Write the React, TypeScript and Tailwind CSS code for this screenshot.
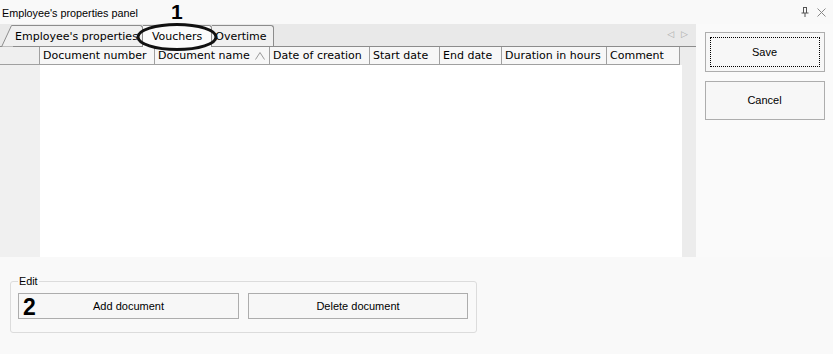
import React from 'react';

const cols = [
  { label: 'Document number', w: 115 },
  { label: 'Document name', w: 115, sort: true },
  { label: 'Date of creation', w: 100 },
  { label: 'Start date', w: 70 },
  { label: 'End date', w: 62 },
  { label: 'Duration in hours', w: 105 },
  { label: 'Comment', w: 73 },
];

function Tab({ label, active, first, cls }: { label: string; active?: boolean; first?: boolean; cls: string }) {
  return (
    <div
      className={`relative flex items-center pt-[2px] border-t border-r border-[#8c8c8c] rounded-tr-[3px] text-[11px] ${
        active ? 'bg-[#fbfbfb] h-[22px] mb-[-1px] z-10' : 'bg-[#f0f0f0] h-[21px]'
      } ${cls}`}
    >
      {first && (
        <svg className="absolute left-[-11px] top-[-1px]" width="12" height="22" viewBox="0 0 12 22">
          <path d="M12 21.5 L0.5 21.5 L10.5 0.5 L12 0.5 Z" fill="#f0f0f0" stroke="none" />
          <path d="M0.5 22 L10.5 0.5 L12 0.5" fill="none" stroke="#8c8c8c" />
        </svg>
      )}
      {label}
    </div>
  );
}

function Btn({ children, w, focus }: { children: React.ReactNode; w: string; focus?: boolean }) {
  return (
    <div
      className={`${w} relative flex items-center justify-center border border-[#adadad] bg-[#f7f7f7] text-[11px] text-black`}
      style={{ fontFamily: '"Liberation Sans", Arial, sans-serif' }}
    >
      {focus && <div className="absolute inset-[4px] border border-dotted border-black" />}
      <span className="relative">{children}</span>
    </div>
  );
}

export default function App() {
  return (
    <div
      className="relative w-[833px] h-[354px] bg-[#f9f9f9] overflow-hidden text-black"
      style={{ fontFamily: '"DejaVu Sans", Verdana, sans-serif' }}
    >
      {/* title bar */}
      <div
        className="h-[24px] flex items-center justify-between pl-[2px] pr-[7px] bg-[#f9f9f9] text-[10.8px]"
        style={{ fontFamily: '"Liberation Sans", Arial, sans-serif' }}
      >
        <span className="mt-[2px]">Employee's properties panel</span>
        <div className="flex items-center gap-[8px] text-[#555]">
          <svg width="8" height="10" viewBox="0 0 8 10">
            <path d="M2 0.5 H6 M2.5 0.5 V6 M5.5 0.5 V6 M0.5 6 H7.5 M4 6 V10" stroke="#555" fill="none" />
          </svg>
          <svg width="9" height="9" viewBox="0 0 9 9">
            <path d="M0.5 0.5 L8.5 8.5 M8.5 0.5 L0.5 8.5" stroke="#888" fill="none" />
          </svg>
        </div>
      </div>

      <div className="flex">
        {/* left: tabs + grid */}
        <div className="w-[696px] flex flex-col">
          <div className="h-[23px] bg-[#e9e9e9] flex items-end border-b border-[#8c8c8c] relative">
            <Tab label="Employee's properties" first cls="ml-[12px] pl-[3px] pr-[4px]" />
            <Tab label="Vouchers" active cls="pl-[9px] pr-[9px]" />
            <Tab label="Overtime" cls="pl-[3px] pr-[6px]" />
            <div className="absolute right-[8px] top-[4px] flex gap-[7px] text-[9px] text-[#aaa]">
              <span>◁</span>
              <span>▷</span>
            </div>
          </div>
          <div className="flex h-[18px] bg-[#f2f2f2]">
            <div className="w-[40px] border-r border-b border-[#a0a0a0] bg-[#efefef]" />
            {cols.map((c) => (
              <div
                key={c.label}
                style={{ width: c.w }}
                className="relative flex items-center pl-[3px] pt-[2px] border-r border-b border-[#a0a0a0] bg-[#f7f7f7] text-[11px] whitespace-nowrap overflow-hidden"
              >
                {c.label}
                {c.sort && (
                  <svg className="absolute right-[4px] top-[5px]" width="10" height="8" viewBox="0 0 10 8">
                    <path d="M0.5 7.5 L5 0.5 L9.5 7.5" stroke="#9a9a9a" fill="none" />
                  </svg>
                )}
              </div>
            ))}
            <div className="w-[2px] bg-[#ececec]" />
            <div className="w-[14px] bg-[#ececec]" />
          </div>
          <div className="flex h-[192px]">
            <div className="w-[40px] bg-[#f0f0f0]" />
            <div className="w-[642px] bg-white" />
            <div className="w-[14px] bg-[#ececec]" />
          </div>
        </div>

        {/* right: actions */}
        <div className="flex-1 flex flex-col items-center pt-[8px] gap-[9px] bg-[#fafafa]">
          <Btn w="w-[120px] h-[40px]" focus>
            Save
          </Btn>
          <Btn w="w-[120px] h-[39px]">Cancel</Btn>
        </div>
      </div>

      {/* bottom edit group */}
      <div className="pt-[24px] pl-[10px]" style={{ fontFamily: '"Liberation Sans", Arial, sans-serif' }}>
        <div className="relative w-[467px] h-[52px] border border-[#dcdcdc] rounded-[3px] flex gap-[9px] pl-[7px] pt-[11px]">
          <span className="absolute left-[7px] top-[-8px] bg-[#f9f9f9] px-[1px] text-[10.8px] leading-[14px]">Edit</span>
          <Btn w="w-[221px] h-[26px]">Add document</Btn>
          <Btn w="w-[220px] h-[26px]">Delete document</Btn>
        </div>
      </div>

      {/* annotations */}
      <div
        className="absolute z-20 left-[171px] top-[0px] text-[21px] font-bold leading-[24px]"
        style={{ fontFamily: '"Liberation Sans", Arial, sans-serif' }}
      >
        1
      </div>
      <svg className="absolute z-20 left-[136px] top-[22px]" width="82" height="30" viewBox="0 0 82 30">
        <ellipse cx="41" cy="15" rx="39" ry="12.5" fill="none" stroke="#111" strokeWidth="3" />
      </svg>
      <div
        className="absolute z-20 left-[23px] top-[294px] text-[23px] font-bold leading-[26px]"
        style={{ fontFamily: '"Liberation Sans", Arial, sans-serif' }}
      >
        2
      </div>
    </div>
  );
}
